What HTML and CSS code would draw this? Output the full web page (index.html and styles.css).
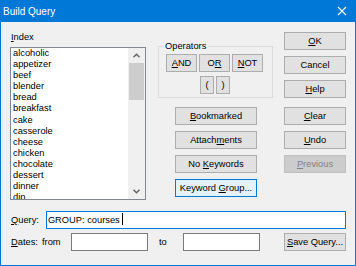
FILE: index.html
```html
<!DOCTYPE html>
<html>
<head>
<meta charset="utf-8">
<link rel="stylesheet" href="styles.css">
</head>
<body>
<div class="window">
  <div class="titlebar">
    <span class="title">Build Query</span>
    <svg class="close" width="10" height="10" viewBox="0 0 10 10"><path d="M1 1 L9 9 M9 1 L1 9" stroke="#fff" stroke-width="1.1" fill="none"/></svg>
  </div>
  <div class="client">
    <div class="top">
      <div class="col-left">
        <div class="label"><u>I</u>ndex</div>
        <div class="listbox">
          <div class="items">
            <div>alcoholic</div>
            <div>appetizer</div>
            <div>beef</div>
            <div>blender</div>
            <div>bread</div>
            <div>breakfast</div>
            <div>cake</div>
            <div>casserole</div>
            <div>cheese</div>
            <div>chicken</div>
            <div>chocolate</div>
            <div>dessert</div>
            <div>dinner</div>
            <div>dip</div>
          </div>
          <div class="scrollbar">
            <div class="arrow up"><svg width="7" height="5" viewBox="0 0 7 5"><polyline points="0.5,4.2 3.5,1.2 6.5,4.2" fill="none" stroke="#606060" stroke-width="1.4"/></svg></div>
            <div class="track"><div class="thumb"></div></div>
            <div class="arrow down"><svg width="7" height="5" viewBox="0 0 7 5"><polyline points="0.5,0.8 3.5,3.8 6.5,0.8" fill="none" stroke="#606060" stroke-width="1.4"/></svg></div>
          </div>
        </div>
      </div>
      <div class="col-mid">
        <fieldset class="group">
          <legend>Operators</legend>
          <div class="ops">
            <button class="btn op"><u>A</u>ND</button>
            <button class="btn op">O<u>R</u></button>
            <button class="btn op"><u>N</u>OT</button>
          </div>
          <div class="parens">
            <button class="btn paren">(</button>
            <button class="btn paren">)</button>
          </div>
        </fieldset>
        <div class="mid-buttons">
          <button class="btn wide"><u>B</u>ookmarked</button>
          <button class="btn wide">Attach<u>m</u>ents</button>
          <button class="btn wide">No <u>K</u>eywords</button>
          <button class="btn wide focus">Keyword <u>G</u>roup...</button>
        </div>
      </div>
      <div class="col-right">
        <button class="btn side"><u>O</u>K</button>
        <button class="btn side">Cancel</button>
        <button class="btn side"><u>H</u>elp</button>
        <button class="btn side sep"><u>C</u>lear</button>
        <button class="btn side"><u>U</u>ndo</button>
        <button class="btn side disabled"><u>P</u>revious</button>
      </div>
    </div>
    <div class="row query-row">
      <div class="label qlabel"><u>Q</u>uery:</div>
      <div class="field query">GROUP: courses&nbsp;<span class="caret"></span></div>
    </div>
    <div class="row dates-row">
      <div class="label dlabel"><u>D</u>ates:</div>
      <div class="label from">from</div>
      <div class="field date"></div>
      <div class="label to">to</div>
      <div class="field date"></div>
      <button class="btn side save"><u>S</u>ave Query...</button>
    </div>
  </div>
</div>
</body>
</html>
```

FILE: styles.css
```css
* { box-sizing: border-box; }
html, body { margin: 0; padding: 0; }
body {
  font-family: "Liberation Sans", Arial, sans-serif;
  font-size: 9.3px;
  color: #000;
  background: #f0f0f0;
}
u { text-decoration: underline; text-underline-offset: 1px; }
.window {
  width: 356px;
  height: 266px;
  border: 1px solid #0078d7;
  border-top: 0;
  background: #f0f0f0;
  display: flex;
  flex-direction: column;
}
.titlebar {
  height: 22px;
  background: #0078d7;
  display: flex;
  align-items: center;
  padding: 0 8px 0 3px;
  margin: 0 -1px;
}
.title {
  color: #fff;
  font-size: 10px;
  flex: 1;
  padding-top: 1px;
}
.close { margin-right: 1px; }
.client {
  padding: 0 9px;
  display: flex;
  flex-direction: column;
}
.top {
  display: flex;
  align-items: flex-start;
}
.col-left {
  width: 136px;
  margin-top: 9px;
  display: flex;
  flex-direction: column;
}
.label {
  line-height: 12px;
  padding-left: 1px;
  white-space: nowrap;
}
.listbox {
  margin-top: 4px;
  height: 153px;
  border: 1px solid #828790;
  background: #fff;
  display: flex;
}
.items {
  flex: 1;
  overflow: hidden;
  padding-left: 2px;
  line-height: 11.1px;
}
.scrollbar {
  width: 17px;
  background: #f0f0f0;
  display: flex;
  flex-direction: column;
}
.arrow {
  height: 15px;
  display: flex;
  align-items: center;
  justify-content: center;
}
.track { flex: 1; }
.thumb {
  margin: 0 1px;
  height: 37px;
  background: #cdcdcd;
}
.col-mid {
  width: 115px;
  margin-left: 12px;
  margin-top: 18px;
  display: flex;
  flex-direction: column;
}
.group {
  margin: 0;
  border: 1px solid #dcdcdc;
  padding: 2px 8px 3px 7px;
  min-width: 0;
}
.group legend {
  padding: 0 2px;
  margin-left: -3px;
  line-height: 12px;
}
.btn {
  font-family: inherit;
  font-size: 9.3px;
  color: #000;
  background: #e1e1e1;
  border: 1px solid #adadad;
  height: 18px;
  padding: 0;
  margin: 0;
  line-height: 16px;
  white-space: nowrap;
  text-align: center;
}
.ops {
  display: flex;
  gap: 2px;
}
.op { width: 31px; }
.parens {
  display: flex;
  justify-content: center;
  gap: 2px;
  margin-top: 4px;
}
.paren { width: 14px; }
.mid-buttons {
  margin-top: 9px;
  margin-left: 17px;
  display: flex;
  flex-direction: column;
  gap: 6px;
}
.wide { width: 82px; }
.focus {
  border-color: #0078d7;
  background: #e5f1fb;
}
.col-right {
  margin-left: 11px;
  margin-top: 10px;
  width: 62px;
  display: flex;
  flex-direction: column;
  gap: 6px;
}
.side { width: 62px; }
.sep { margin-top: 3px; }
.disabled {
  background: #cccccc;
  border-color: #bfbfbf;
  color: #838383;
}
.row {
  display: flex;
  align-items: center;
}
.query-row { margin-top: 11px; }
.dates-row { margin-top: 4px; }
.qlabel { width: 36px; }
.dlabel { width: 32px; }
.from { width: 29px; padding-left: 0; }
.to { width: 24px; margin-left: 11px; padding-left: 0; }
.field {
  height: 18px;
  background: #fff;
  border: 1px solid #7a7a7a;
  line-height: 16px;
  padding-left: 1px;
  white-space: nowrap;
}
.query {
  width: 301px;
  border-color: #0078d7;
}
.caret {
  display: inline-block;
  width: 1px;
  height: 12px;
  background: #000;
  vertical-align: -2px;
}
.date { width: 77px; }
.save { margin-left: auto; }
```
